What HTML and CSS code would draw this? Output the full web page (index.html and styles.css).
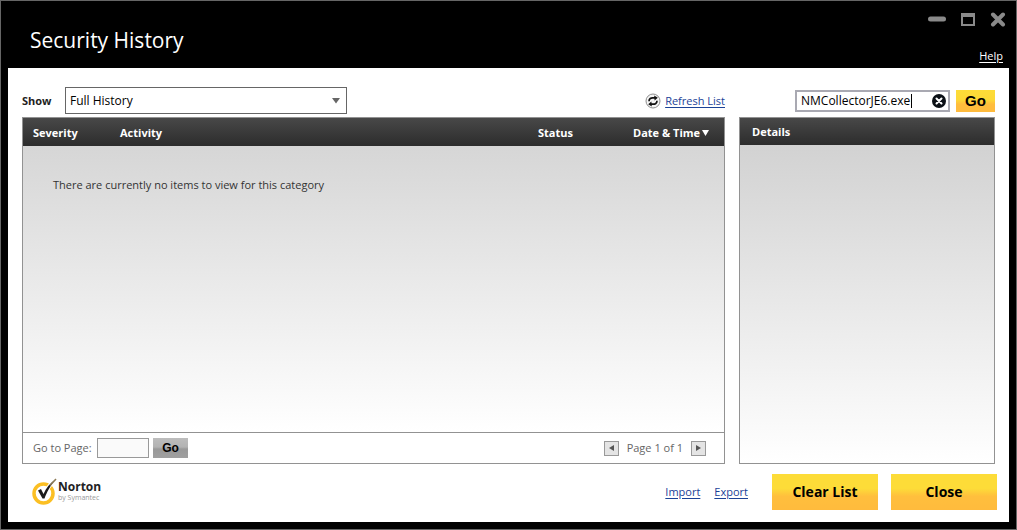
FILE: index.html
```
<!DOCTYPE html>
<html lang="en">
<head>
<meta charset="utf-8">
<title>Security History</title>
<link rel="stylesheet" href="styles.css">
</head>
<body>
<div class="window">
  <header class="titlebar">
    <h1 class="title">Security History</h1>
    <div class="title-side">
      <div class="window-controls">
        <button type="button" class="window-button" aria-label="Minimize"><svg width="18" height="16" viewBox="0 0 18 16"><path d="M2.5 8h13" stroke="#8a8a8a" stroke-width="5" stroke-linecap="round"/></svg></button>
        <button type="button" class="window-button" aria-label="Maximize"><svg width="14" height="16" viewBox="0 0 14 16"><path d="M0 2h14v13H0zM2 6v7h10V6z" fill="#8a8a8a" fill-rule="evenodd"/></svg></button>
        <button type="button" class="window-button" aria-label="Close window"><svg width="16" height="16" viewBox="0 0 16 16"><path d="M3 3.500l10 10M13 3.500l-10 10" stroke="#8a8a8a" stroke-width="4" stroke-linecap="round"/></svg></button>
      </div>
      <a class="help" href="#">Help</a>
    </div>
  </header>

  <main class="content">
    <div class="toolbar">
      <div class="filter">
        <label class="show-label" for="show">Show</label>
        <div class="select-wrap">
          <select id="show" class="select"><option>Full History</option></select>
          <svg class="select-arrow" width="8" height="6" viewBox="0 0 8 6"><path d="M0 0h8L4 5.500z" fill="#666"/></svg>
        </div>
        <div class="refresh">
          <svg width="16" height="16" viewBox="0 0 16 16" fill="none"><circle cx="8" cy="8" r="7" fill="#f4f4f4" stroke="#8f8f8f"/><path d="M4 8.200C4 5.800 6 4.600 8 4.800h2M12 7.800c0 2.400-2 3.600-4 3.400H6" stroke="#111" stroke-width="1.700"/><path d="M9.200 2.400l3.600 2.400-3.200 2.600zM6.800 13.600L3.200 11.200l3.200-2.600z" fill="#111"/></svg>
          <a class="link" href="#">Refresh List</a>
        </div>
      </div>
      <form class="search">
        <div class="search-box">
          <input class="search-input" type="text" aria-label="Search history" value="NMCollectorJE6.exe">
          <span class="caret"></span>
          <button type="button" class="clear-search" aria-label="Clear search"><svg width="14" height="14" viewBox="0 0 14 14"><circle cx="7" cy="7" r="7" fill="#0b1016"/><path d="M4.500 4.500l5 5M9.500 4.500l-5 5" stroke="#fff" stroke-width="2" stroke-linecap="round"/></svg></button>
        </div>
        <button type="button" class="search-go">Go</button>
      </form>
    </div>

    <div class="panels">
      <section class="panel">
        <div class="panel-body">
          <table class="history">
            <thead>
              <tr><th class="col-severity">Severity</th><th class="col-activity">Activity</th><th class="col-status">Status</th><th class="col-date"><span class="sort-label">Date &amp; Time<svg width="7" height="6" viewBox="0 0 7 6"><path d="M0 0h7L3.500 6z" fill="#fff"/></svg></span></th></tr>
            </thead>
            <tbody>
              <tr><td class="empty" colspan="4">There are currently no items to view for this category</td></tr>
            </tbody>
          </table>
        </div>
        <div class="pager">
          <label class="page-label" for="page">Go to Page:</label>
          <input id="page" class="page-input" type="text">
          <button type="button" class="page-go">Go</button>
          <div class="page-nav">
            <button type="button" class="page-step" aria-label="Previous page"><svg width="5" height="6" viewBox="0 0 5 6"><path d="M5 0v6L0 3z" fill="#555"/></svg></button>
            <span>Page 1 of 1</span>
            <button type="button" class="page-step" aria-label="Next page"><svg width="5" height="6" viewBox="0 0 5 6"><path d="M0 0v6l5-3z" fill="#555"/></svg></button>
          </div>
        </div>
      </section>
      <section class="panel">
        <h2 class="details-title">Details</h2>
        <div class="details-body"></div>
      </section>
    </div>

    <footer class="footer">
      <div class="brand">
        <svg width="26" height="28" viewBox="0 0 26 28"><circle cx="11.500" cy="15.500" r="9.500" fill="#fff" stroke="#fbbf23" stroke-width="3.500"/><path d="M12 19C14 12 18 6 24 1" fill="none" stroke="#fff" stroke-width="4"/><path d="M6 12.500l3-1.500 2.500 5C14 10 18 5 24 1 18 8 15 14 12.500 20.500h-2z" fill="#1b1b1b"/><path d="M18 7.500l6-6.500" stroke="#8d7a55" stroke-width="1.500"/></svg>
        <div class="brand-text"><span class="brand-name">Norton</span><span class="brand-by">by Symantec</span></div>
      </div>
      <nav class="file-links"><a class="link" href="#">Import</a><a class="link" href="#">Export</a></nav>
      <div class="actions">
        <button type="button" class="action">Clear List</button>
        <button type="button" class="action">Close</button>
      </div>
    </footer>
  </main>
</div>
</body>
</html>
```
FILE: styles.css
```
* { box-sizing: border-box; }

body {
  margin: 0;
  background: #000;
  color: #333;
  font: 11px/16px "Open Sans", "Noto Sans", sans-serif;
}

button, input, select {
  margin: 0;
  padding: 0;
  border: 0;
  border-radius: 0;
  font: inherit;
  color: #000;
}

svg { display: block; flex: none; }

.window {
  display: flex;
  flex-direction: column;
  min-height: 100vh;
  padding: 0 7px 7px;
  border: 1px solid #666;
  background: #000;
}

.titlebar {
  display: flex;
  justify-content: space-between;
  padding: 10px 3px 4px 22px;
}

.title {
  margin: 14px 0 0;
  color: #fff;
  font-size: 21px;
  line-height: 30px;
  font-weight: 400;
}

.title-side {
  display: flex;
  flex-direction: column;
  align-items: flex-end;
  justify-content: space-between;
  height: 53px;
}

.window-controls { display: flex; gap: 15px; }

.window-button { background: none; }

.help { margin-right: 3px; color: #fff; text-underline-offset: 2px; }

.content {
  flex: 1;
  display: flex;
  flex-direction: column;
  padding: 19px 12px 12px 14px;
  background: #fff;
}

.toolbar, .panels {
  display: grid;
  grid-template-columns: minmax(0, 1fr) 256px;
  gap: 14px;
  margin-right: 2px;
}

.toolbar { align-items: center; margin-bottom: 3px; }

.filter { display: flex; align-items: center; }

.show-label { width: 43px; font-weight: 700; color: #222; }

.select-wrap { position: relative; width: 282px; }

.select {
  display: block;
  width: 100%;
  height: 27px;
  padding: 0 20px 0 4px;
  border: 1px solid #666;
  background: #fff;
  font-size: 12px;
  appearance: none;
}

.select-arrow {
  position: absolute;
  top: 11px;
  right: 7px;
  pointer-events: none;
}

.refresh {
  display: flex;
  align-items: center;
  gap: 4px;
  margin-left: auto;
}

.link { color: #1b4297; text-underline-offset: 2px; }

.search { display: flex; justify-content: flex-end; gap: 6px; }

.search-box {
  position: relative;
  display: flex;
  align-items: center;
  width: 155px;
  height: 22px;
  padding: 0 2px 0 4px;
  border: 2px solid #a9a9b2;
  background: #fff;
}

.search-input {
  flex: 1;
  min-width: 0;
  background: none;
  font-size: 12px;
  line-height: 16px;
  outline: 0;
}

.caret {
  position: absolute;
  top: 2px;
  left: 114px;
  width: 1px;
  height: 14px;
  background: #000;
}

.clear-search { background: none; }

.search-go {
  width: 39px;
  height: 22px;
  background: linear-gradient(#fddc38 0, #fdd836 45%, #ffbd3d 65%, #ffbb3d);
  font: 700 15px/20px "Liberation Sans", Arial, sans-serif;
}

.panels { flex: 1; }

.panel {
  display: flex;
  flex-direction: column;
  border: 1px solid #929292;
}

.panel-body, .details-body {
  flex: 1;
  background: linear-gradient(#d2d2d2, #fff);
}

.history { width: 100%; border-collapse: collapse; table-layout: fixed; }

.history thead { background: linear-gradient(#484848, #2c2c2c); }

.history th {
  height: 28px;
  padding: 2px 0 0;
  color: #fff;
  text-align: left;
  white-space: nowrap;
}

.history .col-severity { width: 97px; padding-left: 10px; }

.history .col-status { width: 95px; }

.history .col-date { width: 91px; }

.sort-label { display: flex; align-items: center; gap: 2px; }

.empty { padding: 31px 30px; }

.pager {
  display: flex;
  align-items: center;
  height: 31px;
  padding: 0 18px 0 10px;
  border-top: 1px solid #929292;
  color: #666;
  background: #fff;
}

.page-label { min-width: 62px; }

.page-input {
  width: 52px;
  height: 20px;
  margin: 0 4px 0 2px;
  border: 1px solid #999;
  background: #fafafa;
}

.page-go {
  width: 35px;
  height: 20px;
  background: linear-gradient(#bdbdbd 0, #b3b3b3 45%, #999 55%, #a0a0a0);
  font: 700 12px/16px "Liberation Sans", Arial, sans-serif;
}

.page-nav {
  display: flex;
  align-items: center;
  gap: 8px;
  margin-left: auto;
}

.page-step {
  display: grid;
  place-items: center;
  width: 15px;
  height: 15px;
  border: 1px solid #999;
  background: #e4e4e4;
}

.details-title {
  margin: 0;
  padding: 1px 12px 0;
  background: linear-gradient(#484848, #2c2c2c);
  color: #fff;
  font-size: 11px;
  line-height: 26px;
}

.footer {
  display: flex;
  align-items: center;
  margin-top: 10px;
}

.brand { display: flex; align-items: center; padding-left: 10px; }

.brand-text { display: flex; flex-direction: column; }

.brand-name {
  color: #222;
  font-size: 12px;
  line-height: 12px;
  font-weight: 700;
}

.brand-by { color: #999; font-size: 7px; line-height: 10px; }

.file-links { display: flex; gap: 14px; margin: 0 24px 0 auto; }

.actions { display: flex; gap: 13px; }

.action {
  width: 106px;
  height: 36px;
  background: linear-gradient(#fddc38 0, #fddc38 40%, #ffbf3d 62%, #ffbb3d);
  font-size: 14px;
  font-weight: 700;
}
```
